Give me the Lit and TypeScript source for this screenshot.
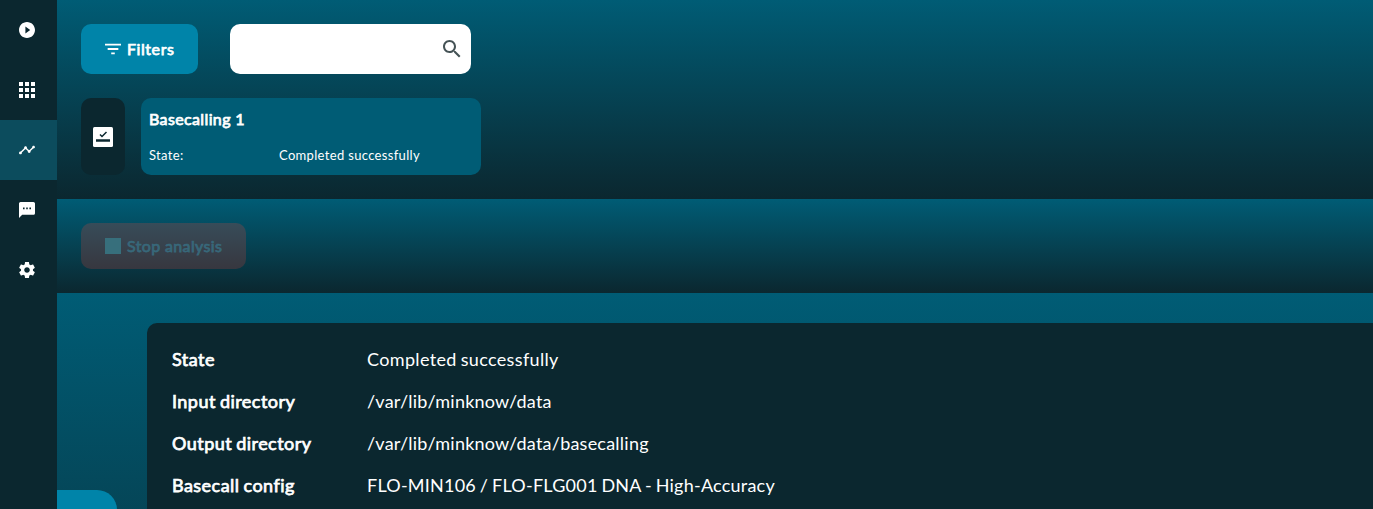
import { LitElement, html, css } from "lit";
import { customElement } from "lit/decorators.js";

const icon = (d: string, box = "0 0 24 24") => html`<svg viewBox=${box} fill="currentColor"><path d=${d}></path></svg>`;

const NAV = [
  ["2 2 20 20", "M12 2C6.480 2 2 6.480 2 12s4.480 10 10 10 10-4.480 10-10S17.520 2 12 2zm-2 14.500v-9l6 4.500-6 4.500z"],
  ["4 4 16 16", "M4 8h4V4H4v4zm6 12h4v-4h-4v4zm-6 0h4v-4H4v4zm0-6h4v-4H4v4zm6 0h4v-4h-4v4zm6-10v4h4V4h-4zm-6 4h4V4h-4v4zm6 6h4v-4h-4v4zm0 6h4v-4h-4v4z"],
  ["1 1 22 22", "M23 8c0 1.100-.9 2-2 2-.18 0-.35-.02-.51-.07l-3.560 3.550c.05.16.07.34.07.52 0 1.100-.9 2-2 2s-2-.9-2-2c0-.18.02-.36.07-.52l-2.550-2.550c-.16.05-.34.07-.52.07s-.36-.02-.52-.07l-4.550 4.560c.05.16.07.33.07.51 0 1.100-.9 2-2 2s-2-.9-2-2 .9-2 2-2c.18 0 .35.02.51.07l4.560-4.550C8.020 9.360 8 9.180 8 9c0-1.100.9-2 2-2s2 .9 2 2c0 .18-.02.36-.07.52l2.550 2.550c.16-.05.34-.07.52-.07s.36.02.52.07l3.550-3.560C19.020 8.350 19 8.180 19 8c0-1.100.9-2 2-2s2 .9 2 2z"],
  ["2 2 20 20", "M20 2H4c-1.100 0-2 .9-2 2v18l4-4h14c1.100 0 2-.9 2-2V4c0-1.100-.9-2-2-2zM9 11H7V9h2v2zm4 0h-2V9h2v2zm4 0h-2V9h2v2z"],
  ["2 2 20 20", "M19.430 12.980c.04-.32.07-.64.07-.98s-.03-.66-.07-.98l2.110-1.650c.19-.15.24-.42.12-.64l-2-3.460c-.12-.22-.39-.3-.61-.22l-2.490 1c-.52-.4-1.080-.73-1.690-.98l-.38-2.650C14.460 2.180 14.250 2 14 2h-4c-.25 0-.46.18-.49.42l-.38 2.650c-.61.25-1.170.59-1.690.98l-2.490-1c-.23-.09-.49 0-.61.22l-2 3.460c-.13.22-.07.49.12.64l2.110 1.650c-.04.32-.07.65-.07.98s.03.66.07.98l-2.110 1.650c-.19.15-.24.42-.12.64l2 3.460c.12.22.39.3.61.22l2.490-1c.52.4 1.080.73 1.690.98l.38 2.650c.03.24.24.42.49.42h4c.25 0 .46-.18.49-.42l.38-2.650c.61-.25 1.170-.59 1.690-.98l2.490 1c.23.09.49 0 .61-.22l2-3.460c.12-.22.07-.49-.12-.64l-2.110-1.650zM12 15.500c-1.930 0-3.500-1.570-3.500-3.500s1.570-3.500 3.500-3.500 3.500 1.570 3.500 3.500-1.570 3.500-3.500 3.500z"],
];
const FILTER = "M10 18h4v-2h-4v2zM3 6v2h18V6H3zm3 7h12v-2H6v2z";
const SEARCH = "M15.500 14h-.79l-.28-.27C15.410 12.590 16 11.110 16 9.500 16 5.910 13.090 3 9.500 3S3 5.910 3 9.500 5.910 16 9.500 16c1.610 0 3.090-.59 4.230-1.570l.27.28v.79l5 4.990L20.490 19l-4.990-5zm-6 0C7.010 14 5 11.990 5 9.500S7.010 5 9.500 5 14 7.010 14 9.500 11.990 14 9.500 14z";

const DETAILS = [
  ["State", "Completed successfully"],
  ["Input directory", "/var/lib/minknow/data"],
  ["Output directory", "/var/lib/minknow/data/basecalling"],
  ["Basecall config", "FLO-MIN106 / FLO-FLG001 DNA - High-Accuracy"],
];

@customElement("app-root")
export class AppRoot extends LitElement {
  static styles = css`
    :host { display: flex; height: 509px; overflow: hidden; background: #0b272f; color: #fff; font-family: Lato, sans-serif; }
    * { box-sizing: border-box; }
    svg { display: block; flex: none; }
    nav { width: 57px; flex: none; background: #0b272f; }
    .nav-item { width: 57px; height: 60px; padding-right: 3px; display: flex; align-items: center; justify-content: center; }
    .nav-item svg { width: 16px; height: 16px; }
    .nav-item.active { background: #0c4c5d; }
    main { flex: 1; min-width: 0; display: flex; flex-direction: column; }
    .band { background: linear-gradient(#005c75, #0b272f); padding: 24px; flex: none; }
    .filters { height: 199px; }
    .actions { height: 94px; }
    .row { display: flex; }
    .button { display: flex; align-items: center; gap: 6px; padding: 0 24px; border-radius: 10px; font-size: 16px; white-space: nowrap; }
    .button-text { line-height: 20px; }
    .button-text, .run-title, .label { -webkit-text-stroke: .75px currentColor; letter-spacing: .37px; }
    .filter-button { width: 117px; height: 50px; background: #0084a9; }
    .filter-button .button-text { letter-spacing: .57px; }
    .filter-button svg { width: 16px; height: 16px; }
    .search { margin-left: 32px; width: 241px; height: 50px; border-radius: 10px; background: #fff; color: #455356; display: flex; align-items: center; justify-content: flex-end; padding-right: 7px; }
    .search svg { width: 24px; height: 24px; }
    .runs { margin-top: 24px; gap: 16px; height: 77px; }
    .kind { width: 44px; border-radius: 10px; background: #0b272f; display: flex; align-items: center; justify-content: center; }
    .kind svg { width: 20px; height: 20px; }
    .run { width: 340px; border-radius: 10px; background: #005c75; padding: 11px 8px; }
    .run-title { font-size: 16px; line-height: 20px; }
    .run-state { display: grid; grid-template-columns: 130px 1fr; margin-top: 18px; font-size: 13px; line-height: 16px; letter-spacing: .33px; }
    .stop { width: 165px; height: 46px; background: linear-gradient(#374c59, #37373f); color: #37687a; }
    .square { width: 16px; height: 16px; flex: none; background: #376f7c; }
    .content { position: relative; flex: 1; background: linear-gradient(#005c75, #0b272f 515px); padding: 30px 0 0 90px; }
    .details { height: 400px; border-radius: 10px 0 0; background: #0b272f; padding: 15px 25px; }
    .detail { height: 42px; display: grid; grid-template-columns: 195px 1fr; align-items: center; font-size: 18px; letter-spacing: .23px; word-spacing: -1px; }
    .detail:first-child { letter-spacing: .345px; }
    .detail .label { letter-spacing: .46px; }
    .drawer { position: absolute; left: 0; top: 197px; width: 60px; height: 60px; border-radius: 0 20px 0 0; background: #0084a9; }
  `;

  render() {
    return html`
      <nav>${NAV.map(([box, d], i) => html`<div class="nav-item ${i === 2 ? "active" : ""}">${icon(d, box)}</div>`)}</nav>
      <main>
        <section class="band filters">
          <div class="row">
            <div class="button filter-button">${icon(FILTER, "3 3 18 18")}<span class="button-text">Filters</span></div>
            <div class="search">${icon(SEARCH)}</div>
          </div>
          <div class="row runs">
            <div class="kind">
              <svg viewBox="0 0 20 20"><rect width="20" height="20" rx="1.500" fill="#fff"></rect><path d="M3 13.500h14" stroke="#0b272f" stroke-width="2.500"></path><path d="M7 7.500l2 2 4.500-4.500" fill="none" stroke="#0b272f" stroke-width="1.500"></path></svg>
            </div>
            <div class="run">
              <div class="run-title">Basecalling 1</div>
              <div class="run-state"><span>State:</span><span>Completed successfully</span></div>
            </div>
          </div>
        </section>
        <section class="band actions">
          <div class="button stop"><span class="square"></span><span class="button-text">Stop analysis</span></div>
        </section>
        <section class="content">
          <div class="details">
            ${DETAILS.map(([k, v]) => html`<div class="detail"><span class="label">${k}</span><span>${v}</span></div>`)}
          </div>
          <div class="drawer"></div>
        </section>
      </main>
    `;
  }
}
